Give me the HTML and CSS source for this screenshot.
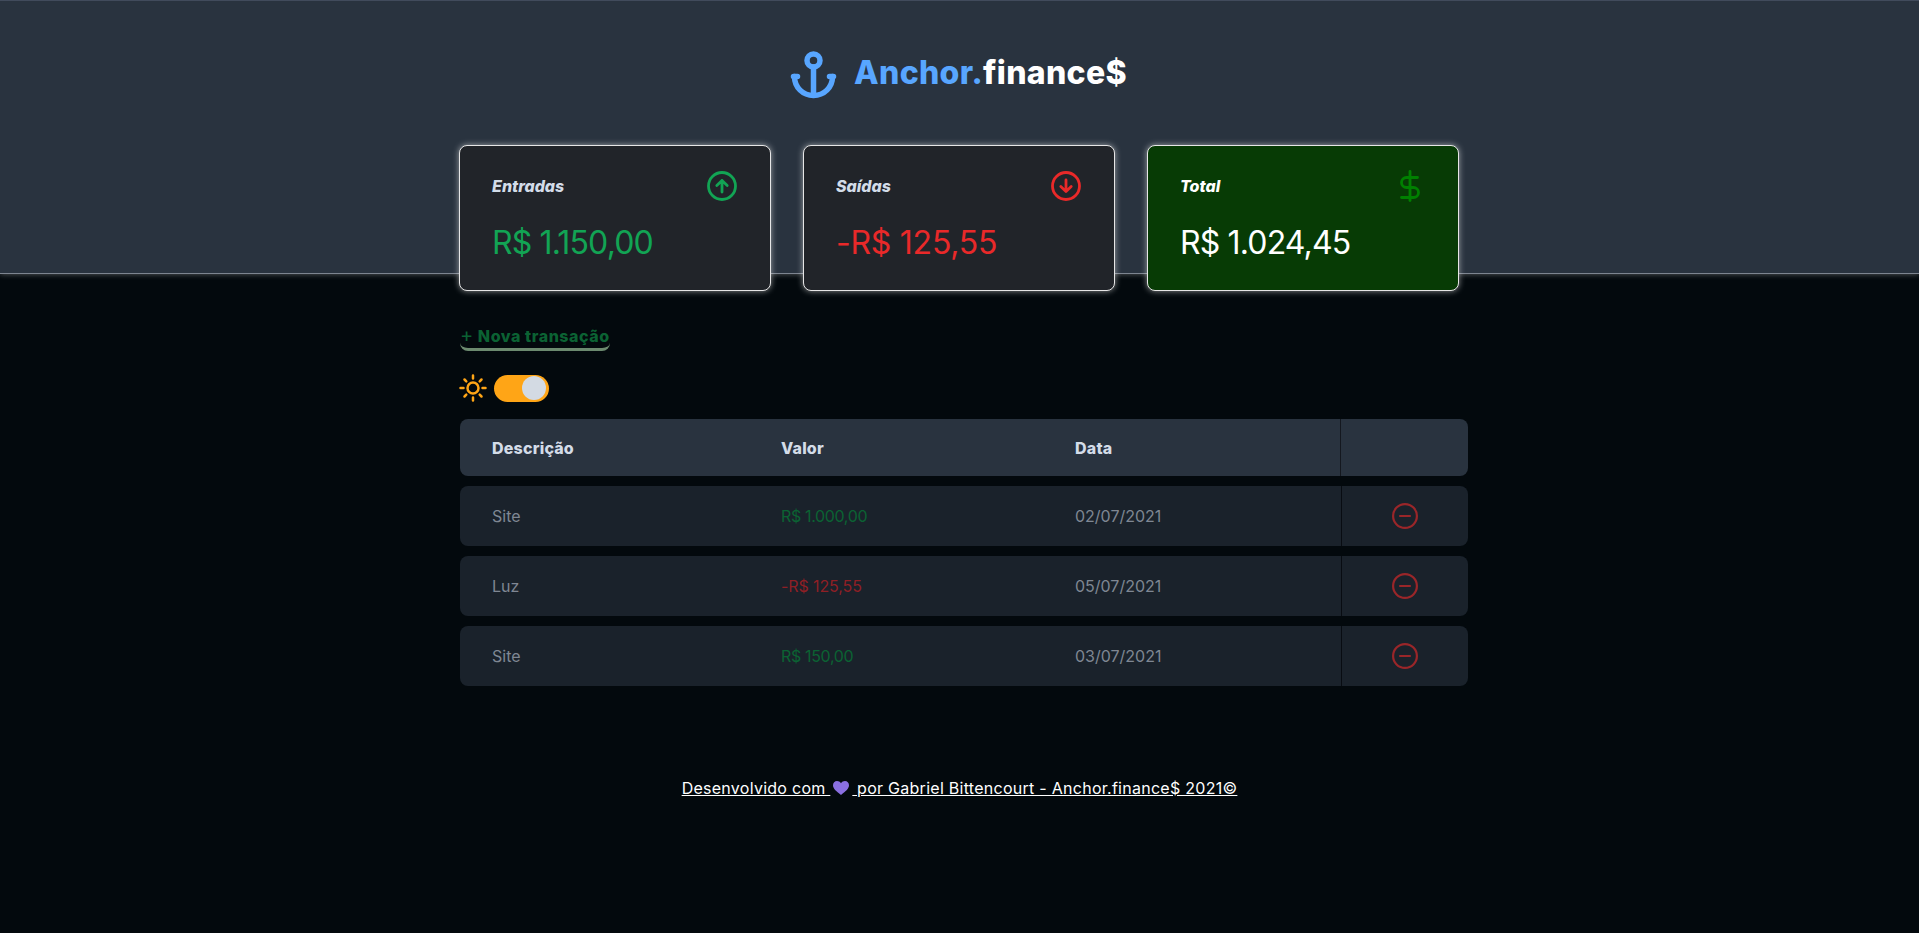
FILE: index.html
```html
<!DOCTYPE html>
<html lang="pt-BR">
<head>
    <meta name="viewport" content="width=device-width, initial-scale=1.0">
    <meta charset="UTF-8">
    <title>Anchor.finance$</title>
    <link rel="stylesheet" href="styles.css">
</head>
<body>
    <header class="top">
        <div class="logo">
            <svg class="logo-icon" viewBox="0 0 48 48" fill="none" stroke="#58a6ff" stroke-width="5.500" stroke-linecap="round" stroke-linejoin="round">
                <circle cx="23.500" cy="9.500" r="6.500"/>
                <path d="M23.500 16V44"/>
                <path d="M4.500 25.500c0 11 8.500 19 19 19s19-8 19-19"/>
                <path d="M3.500 25.500h4M43.500 25.500h-4"/>
            </svg>
            <h1><span class="logo-blue">Anchor.</span>finance$</h1>
        </div>
    </header>
    <main class="container">
        <section class="cards">
            <div class="card">
                <div class="card-head">
                    <span>Entradas</span>
                    <svg class="card-icon" viewBox="0 0 30 30" fill="none" stroke="#12a454" stroke-width="2.800" stroke-linecap="round" stroke-linejoin="round">
                        <circle cx="15" cy="15" r="13.500"/>
                        <path d="M15 21V9.500M9.800 14.500 15 9.500l5.200 5"/>
                    </svg>
                </div>
                <p class="card-value income">R$ 1.150,00</p>
            </div>
            <div class="card">
                <div class="card-head">
                    <span>Saídas</span>
                    <svg class="card-icon" viewBox="0 0 30 30" fill="none" stroke="#e92929" stroke-width="2.800" stroke-linecap="round" stroke-linejoin="round">
                        <circle cx="15" cy="15" r="13.500"/>
                        <path d="M15 9v11.500M9.800 15.500 15 20.500l5.200-5"/>
                    </svg>
                </div>
                <p class="card-value expense">-R$ 125,55</p>
            </div>
            <div class="card card-total">
                <div class="card-head">
                    <span>Total</span>
                    <svg class="card-icon dollar" viewBox="0 0 20 32" fill="none" stroke="#008000" stroke-width="2.800" stroke-linecap="round" stroke-linejoin="round">
                        <path d="M10 1.500v29"/>
                        <path d="M17.500 7.500H6.500a5 5 0 0 0 0 10h7a5 5 0 0 1 0 10H1.500"/>
                    </svg>
                </div>
                <p class="card-value">R$ 1.024,45</p>
            </div>
        </section>

        <a class="new-link" href="#"><span class="plus">+</span> Nova transação</a>

        <div class="theme-row">
            <svg class="sun" viewBox="0 0 28 28" fill="none" stroke="#ffa516" stroke-width="2.500" stroke-linecap="round">
                <circle cx="14" cy="14" r="5.500"/>
                <path d="M14 1.500v3M14 23.500v3M1.500 14h3M23.500 14h3M5.500 5.500l1.800 1.800M20.700 20.700l1.800 1.800M5.500 22.500l1.800-1.800M20.700 7.300l1.800-1.800"/>
            </svg>
            <div class="switch"><span class="knob"></span></div>
        </div>

        <table class="transactions">
            <thead>
                <tr>
                    <th class="col-desc">Descrição</th>
                    <th class="col-value">Valor</th>
                    <th class="col-date">Data</th>
                    <th class="col-action"></th>
                </tr>
            </thead>
            <tbody>
                <tr>
                    <td>Site</td>
                    <td class="income">R$ 1.000,00</td>
                    <td>02/07/2021</td>
                    <td class="action"><svg class="remove" viewBox="0 0 26 26" fill="none" stroke="#e92929" stroke-width="2.200" stroke-linecap="round"><circle cx="13" cy="13" r="11.900"/><path d="M8 13h10"/></svg></td>
                </tr>
                <tr>
                    <td>Luz</td>
                    <td class="expense">-R$ 125,55</td>
                    <td>05/07/2021</td>
                    <td class="action"><svg class="remove" viewBox="0 0 26 26" fill="none" stroke="#e92929" stroke-width="2.200" stroke-linecap="round"><circle cx="13" cy="13" r="11.900"/><path d="M8 13h10"/></svg></td>
                </tr>
                <tr>
                    <td>Site</td>
                    <td class="income">R$ 150,00</td>
                    <td>03/07/2021</td>
                    <td class="action"><svg class="remove" viewBox="0 0 26 26" fill="none" stroke="#e92929" stroke-width="2.200" stroke-linecap="round"><circle cx="13" cy="13" r="11.900"/><path d="M8 13h10"/></svg></td>
                </tr>
            </tbody>
        </table>
    </main>
    <footer class="bottom">
        <p>Desenvolvido com <svg class="heart" viewBox="0 0 16 14"><path d="M8 14C3 10 0 7.500 0 4.200 0 1.800 1.800 0 4 0c1.600 0 3.100.8 4 2.200C8.900.8 10.400 0 12 0c2.200 0 4 1.800 4 4.200C16 7.500 13 10 8 14z" fill="#8a6fe0"/></svg> por Gabriel Bittencourt - Anchor.finance$ 2021©</p>
    </footer>
</body>
</html>
```

FILE: styles.css
```css
* {
    box-sizing: border-box;
}
body {
    font-family: Inter, "Open Sans", sans-serif;
    margin: 0;
    padding: 0;
    min-height: 933px;
    background-color: #03090d;
    color: #ffffff;
}
.top {
    height: 274px;
    padding-top: 50px;
    background: #29333f;
    border-top: 1px solid #414b5c;
    border-bottom: 1px solid #7d8590;
    box-shadow: 0 0 6px rgba(255, 255, 255, 0.35);
}
.logo {
    display: flex;
    justify-content: center;
    align-items: center;
    gap: 16px;
    height: 48px;
    padding-right: 2px;
}
.logo-icon {
    width: 48px;
    height: 48px;
}
.logo h1 {
    margin: 0 0 5px;
    font-size: 32px;
    font-weight: 800;
    letter-spacing: 0.3px;
}
.logo-blue {
    color: #58a6ff;
}
.container {
    width: 1008px;
    margin: -129px 0 0 460px;
    position: relative;
}
.cards {
    display: grid;
    grid-template-columns: 312px 312px 312px;
    gap: 32px;
    margin-left: -1px;
}
.card {
    height: 146px;
    padding: 25px 32px;
    background: #212429;
    border: 1px solid #e6e6e6;
    border-radius: 8px;
    box-shadow: 0 0 6px rgba(255, 255, 255, 0.55);
}
.card-total {
    background: #073b05;
}
.card-head {
    display: flex;
    justify-content: space-between;
    align-items: center;
    height: 30px;
    font-size: 16px;
    font-weight: 800;
    font-style: italic;
    color: #d3dce8;
}
.card-total .card-head {
    color: #ffffff;
}
.card-icon {
    width: 30px;
    height: 30px;
    margin-right: 1px;
}
.dollar {
    width: 20px;
    height: 32px;
    margin-right: 6px;
}
.card-value {
    margin: 22px 0 0;
    font-size: 32px;
    font-weight: 400;
    line-height: 40px;
    letter-spacing: -0.85px;
}
.card-value.expense {
    letter-spacing: -0.25px;
}
.income {
    color: #12a454;
}
.expense {
    color: #e92929;
}
.new-link {
    display: block;
    width: 150px;
    margin-top: 33px;
    font-size: 16px;
    font-weight: 800;
    line-height: 24px;
    letter-spacing: 0.55px;
    color: #0b6233;
    text-decoration: none;
    white-space: nowrap;
    border-bottom: 3px solid #6c8a6f;
    border-radius: 0 0 8px 8px;
}
.plus {
    font-size: 20px;
    font-weight: 400;
    line-height: 20px;
}
.theme-row {
    display: flex;
    align-items: center;
    gap: 7px;
    margin-top: 23px;
    margin-left: -1px;
}
.sun {
    width: 28px;
    height: 28px;
}
.switch {
    display: flex;
    justify-content: flex-end;
    align-items: center;
    width: 55px;
    height: 27px;
    padding-right: 3px;
    background: #ffa516;
    border-radius: 14px;
}
.knob {
    width: 24px;
    height: 24px;
    background: #d3dae3;
    border-radius: 50%;
}
.transactions {
    width: 1008px;
    margin-top: 7px;
    border-collapse: separate;
    border-spacing: 0 10px;
    table-layout: fixed;
    font-size: 16px;
}
.transactions th {
    height: 57px;
    padding: 0 32px;
    text-align: left;
    font-weight: 800;
    letter-spacing: 0.2px;
    color: #d3dce8;
    background: #29333f;
}
.col-desc {
    width: 289px;
    border-radius: 8px 0 0 8px;
}
.col-value {
    width: 294px;
}
.col-date {
    width: 297px;
}
.col-action {
    border-left: 1px solid #14181f;
    border-radius: 0 8px 8px 0;
}
.transactions td {
    height: 60px;
    padding: 0 32px;
    background: #1a222b;
    color: #7f8793;
    font-weight: 400;
}
.transactions td.income {
    color: #0b6233;
    letter-spacing: -0.35px;
}
.transactions td.expense {
    color: #8f1f25;
    letter-spacing: -0.1px;
}
.transactions td:first-child {
    border-radius: 8px 0 0 8px;
}
.transactions td.action {
    padding: 0 0 0 2px;
    text-align: center;
    box-shadow: inset 1px 0 0 #1a222b, inset 2px 0 0 #080c12;
    border-radius: 0 8px 8px 0;
}
.remove {
    display: block;
    width: 26px;
    height: 26px;
    margin: 0 auto;
    opacity: 0.62;
}
.bottom {
    margin-top: 82px;
    text-align: center;
    font-size: 16px;
    letter-spacing: 0.27px;
}
.bottom p {
    margin: 0;
    text-decoration: underline;
}
.heart {
    width: 16px;
    height: 14px;
    margin: 0 3px;
    vertical-align: -1px;
}
```
